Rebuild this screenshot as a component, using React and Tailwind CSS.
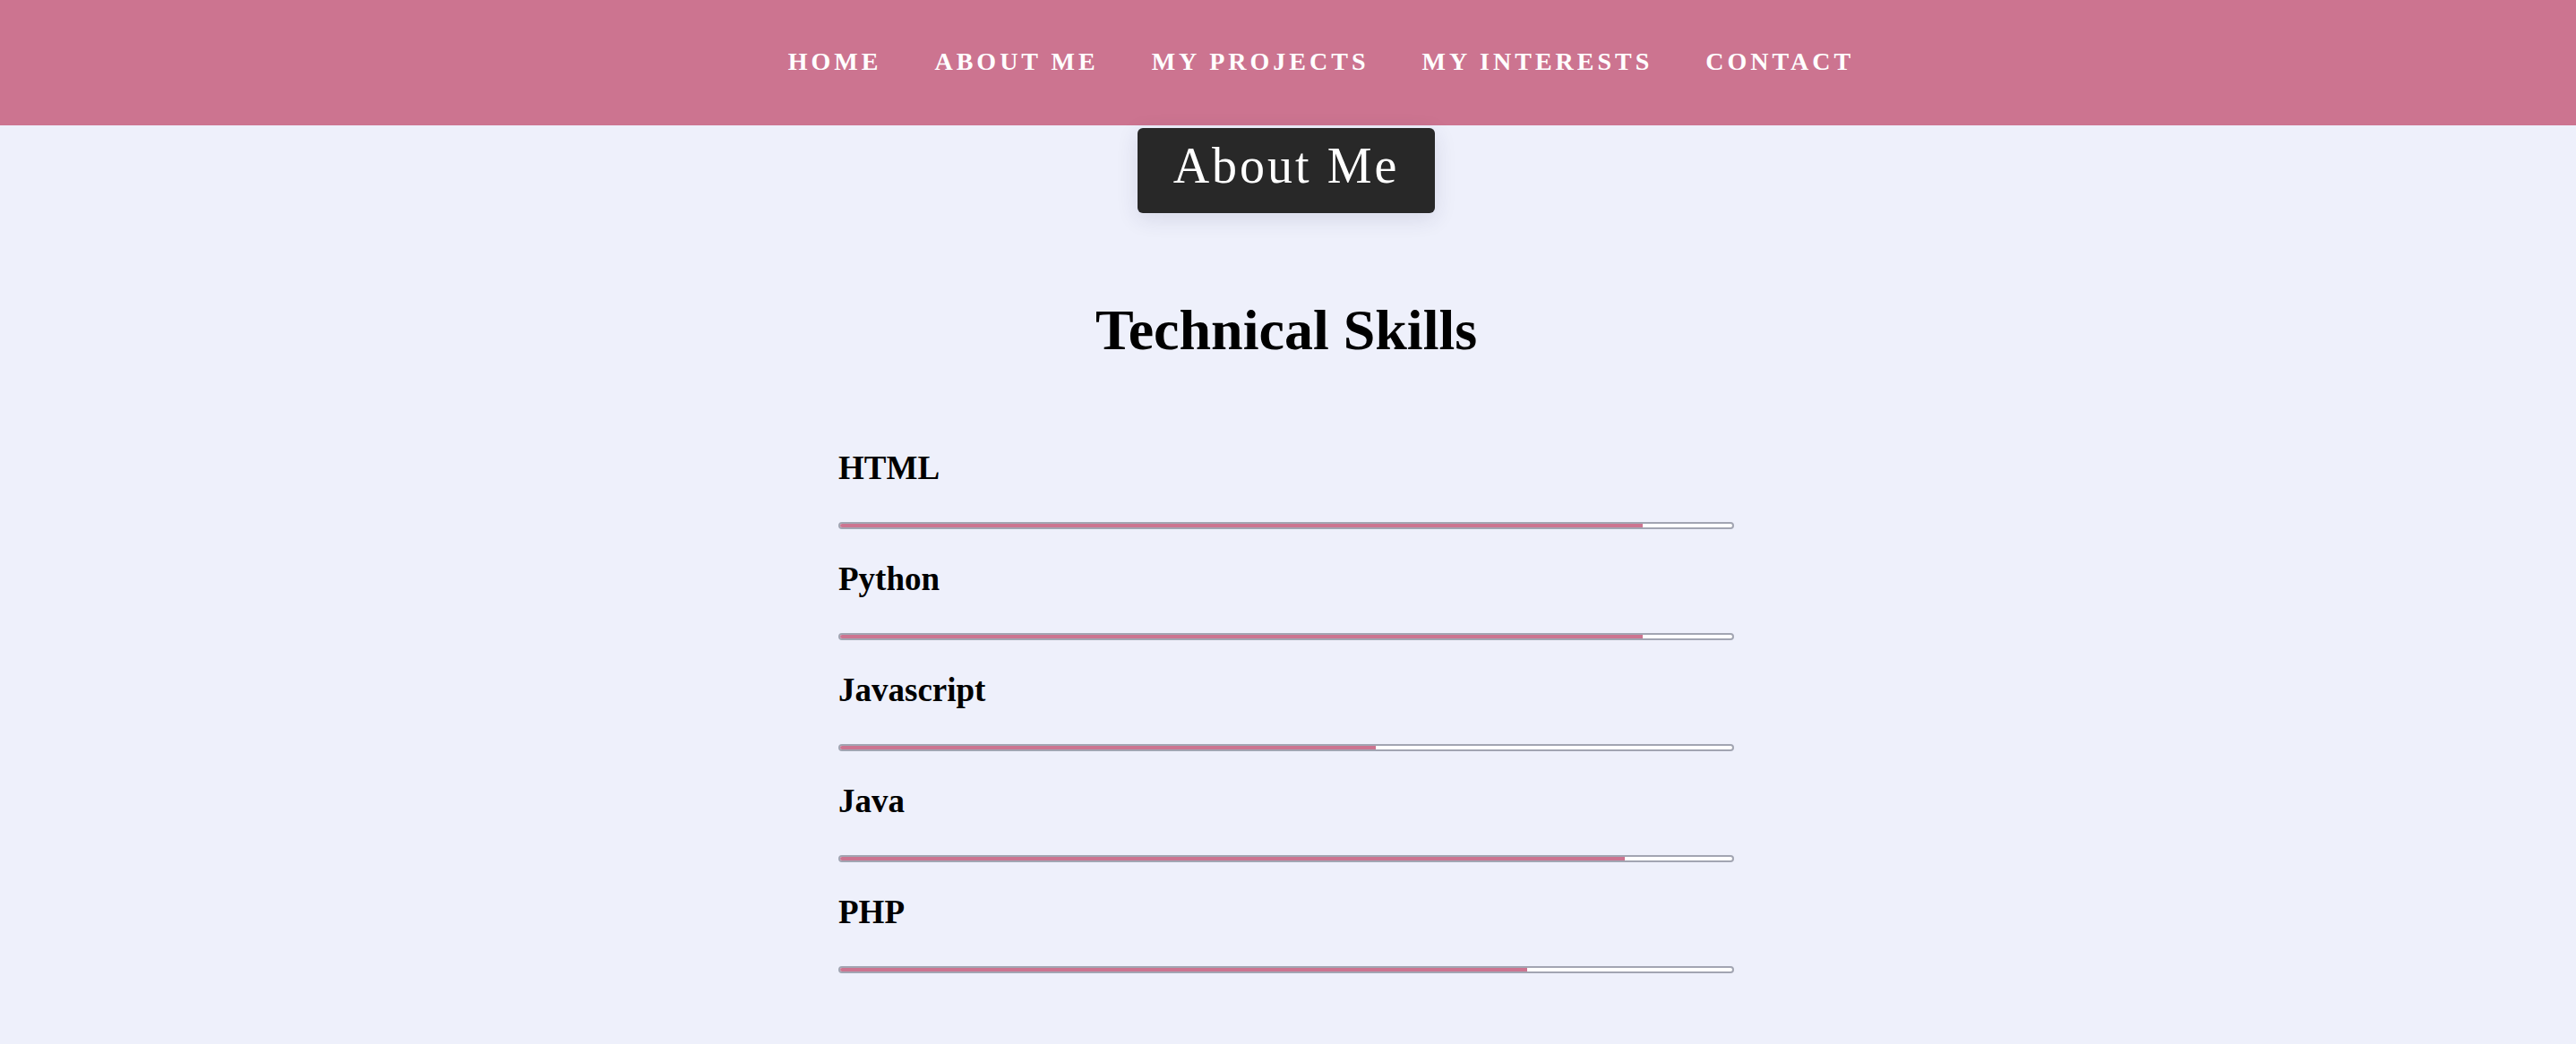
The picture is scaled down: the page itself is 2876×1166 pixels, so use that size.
import React from "react";

const links = ["Home", "About Me", "My Projects", "My Interests", "Contact"];

const skills = [
  { name: "HTML", level: 90 },
  { name: "Python", level: 90 },
  { name: "Javascript", level: 60 },
  { name: "Java", level: 88 },
  { name: "PHP", level: 77 },
];

const App = () => {
  return (
    <div className="min-h-screen bg-[#eef0fb] font-['Liberation_Serif',serif] text-black">
      {/* Top navigation */}
      <nav className="h-[140px] bg-[#cc7490] pt-[53px] pl-[74px] flex justify-center">
        <ul className="flex gap-[59px]">
          {links.map((link) => (
            <li
              key={link}
              className="text-[28px] leading-[32px] font-bold tracking-[4px] uppercase text-white cursor-pointer"
            >
              {link}
            </li>
          ))}
        </ul>
      </nav>

      <main className="flex flex-col items-center pr-[4px]">
        {/* Section tag */}
        <div className="mt-[3px] h-[95px] px-[40px] pt-[11px] bg-[#282828] rounded-[6px] shadow-[0_6px_24px_rgba(40,44,90,0.12)]">
          <span className="text-[56px] leading-[62px] tracking-[3px] text-white">About Me</span>
        </div>

        <h1 className="mt-[94px] text-[64px] leading-[74px] font-bold">Technical Skills</h1>

        {/* Skill bars */}
        <div className="w-[1000px] mt-[95px]">
          {skills.map((skill) => (
            <div key={skill.name} className="mb-[34px]">
              <h3 className="text-[37px] leading-[43px] font-bold">{skill.name}</h3>
              <div className="mt-[39px] h-[8px] rounded-full border-2 border-[#a2a5b2] bg-white overflow-hidden">
                <div className="h-full bg-[#cc7490]" style={{ width: `${skill.level}%` }} />
              </div>
            </div>
          ))}
        </div>
      </main>
    </div>
  );
};

export default App;
